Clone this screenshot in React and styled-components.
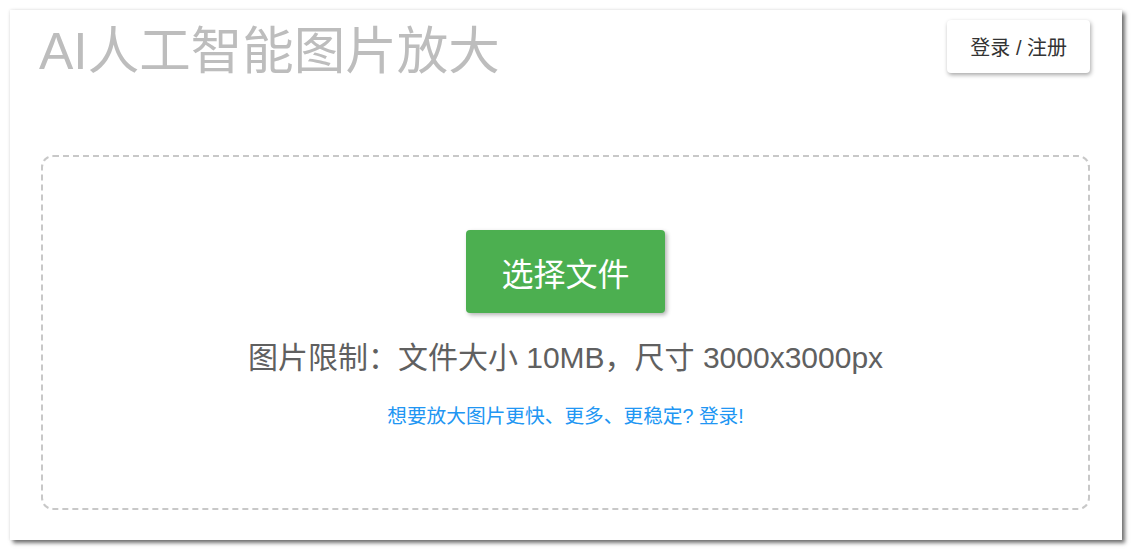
import React from "react";
import styled, { createGlobalStyle } from "styled-components";

const GlobalStyle = createGlobalStyle`
  html, body {
    margin: 0;
    padding: 0;
    background: #fff;
  }
  body {
    font-family: "Liberation Sans", "Noto Sans CJK SC", sans-serif;
  }
`;

const Page = styled.div`
  padding: 10px 12px 10px 10px;
`;

const Card = styled.div`
  width: 1112px;
  height: 530px;
  box-sizing: border-box;
  padding: 10px 32px 0 31px;
  background: #fff;
  box-shadow: 3px 3px 4px rgba(0, 0, 0, 0.55), 0 0 3px rgba(0, 0, 0, 0.12);
  display: flex;
  flex-direction: column;
`;

const Header = styled.div`
  display: flex;
  justify-content: space-between;
  align-items: flex-start;
  height: 70px;
`;

const Title = styled.h1`
  margin: 1px 0 0 -2px;
  font-size: 51.5px;
  line-height: 61px;
  font-weight: 400;
  color: #bdbdbd;
`;

const LoginButton = styled.button`
  height: 53px;
  padding: 0 23px;
  border: none;
  border-radius: 4px;
  background: #fff;
  color: #333;
  font-family: inherit;
  font-size: 20px;
  cursor: pointer;
  box-shadow: 1px 2px 4px rgba(0, 0, 0, 0.35);
`;

const DropZone = styled.div`
  margin-top: 65px;
  height: 355px;
  box-sizing: border-box;
  border: 2px dashed #c8c8c8;
  border-radius: 12px;
  display: flex;
  flex-direction: column;
  align-items: center;
  padding-top: 73px;
`;

const PickButton = styled.button`
  height: 83px;
  padding: 0 35px;
  border: none;
  border-radius: 4px;
  background: #4caf50;
  color: #fff;
  font-family: inherit;
  font-size: 32px;
  cursor: pointer;
  box-shadow: 2px 2px 4px rgba(0, 0, 0, 0.3);
`;

const Limit = styled.p`
  margin: 22px 0 0;
  font-size: 30px;
  line-height: 45px;
  color: #606060;
`;

const LoginLink = styled.a`
  margin-top: 21px;
  font-size: 19.7px;
  line-height: 30px;
  color: #2196f3;
  text-decoration: none;
  cursor: pointer;
`;

const App = () => {
  return (
    <Page>
      <GlobalStyle />
      <Card>
        <Header>
          <Title>AI人工智能图片放大</Title>
          <LoginButton>登录 / 注册</LoginButton>
        </Header>
        <DropZone>
          <PickButton>选择文件</PickButton>
          <Limit>图片限制：文件大小 10MB，尺寸 3000x3000px</Limit>
          <LoginLink>想要放大图片更快、更多、更稳定? 登录!</LoginLink>
        </DropZone>
      </Card>
    </Page>
  );
};

export default App;
